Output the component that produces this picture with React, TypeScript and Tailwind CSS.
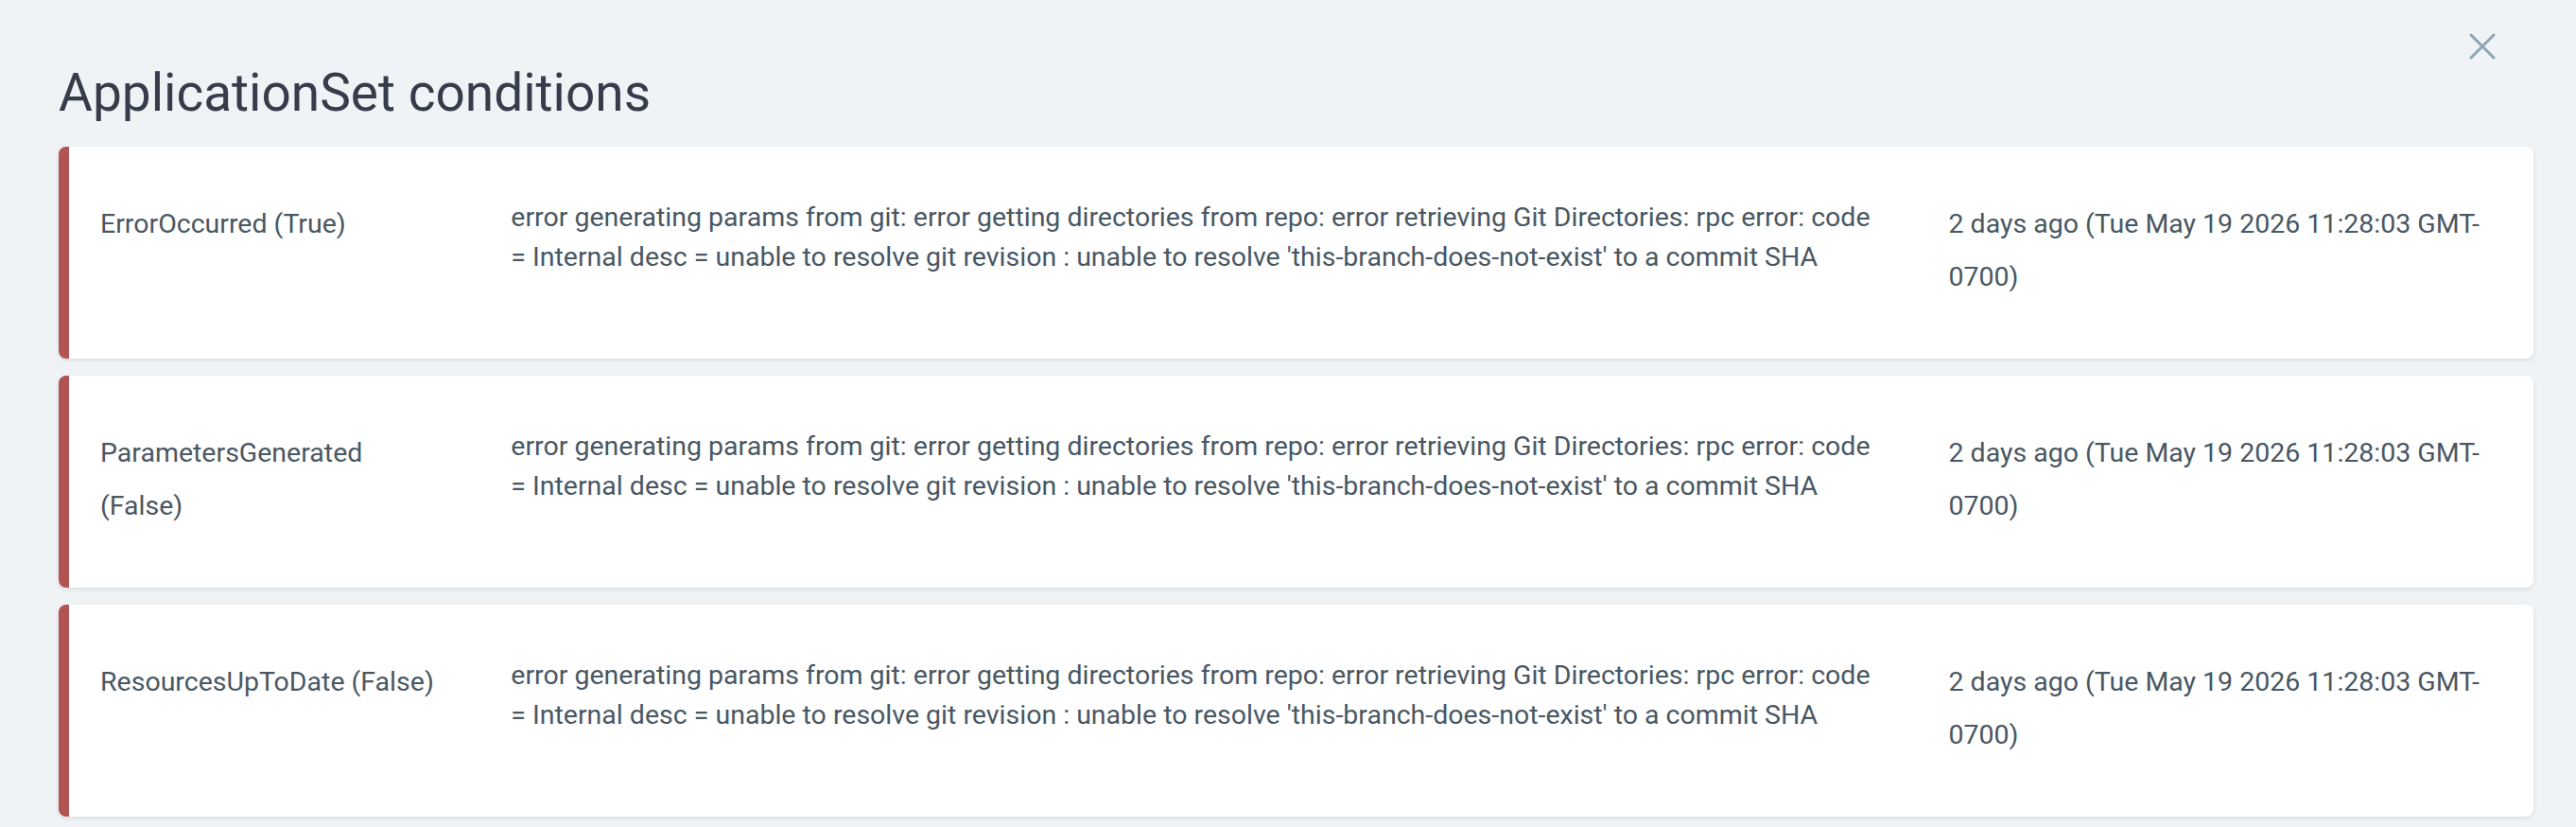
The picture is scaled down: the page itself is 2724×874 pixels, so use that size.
const CONDITIONS = [
  { type: 'ErrorOccurred', status: 'True' },
  { type: 'ParametersGenerated', status: 'False' },
  { type: 'ResourcesUpToDate', status: 'False' },
];

const MESSAGE =
  "error generating params from git: error getting directories from repo: error retrieving Git Directories: rpc error: code = Internal desc = unable to resolve git revision : unable to resolve 'this-branch-does-not-exist' to a commit SHA";

const TIME = '2 days ago (Tue May 19 2026 11:28:03 GMT-0700)';

function CloseIcon() {
  return (
    <svg width="28" height="28" viewBox="0 0 28 28" fill="none" stroke="#8fa4b1" strokeWidth="3" strokeLinecap="round">
      <line x1="2" y1="2" x2="26" y2="26" />
      <line x1="26" y1="2" x2="2" y2="26" />
    </svg>
  );
}

export default function App() {
  return (
    <div className="min-h-screen w-full bg-[#eff3f6] pl-[62px] pr-[45px] pt-[65px] font-['Roboto','Liberation_Sans',sans-serif] relative">
      {/* close button */}
      <button className="absolute top-[35px] right-[85px] w-[28px] h-[28px] flex items-center justify-center">
        <CloseIcon />
      </button>

      <h2 className="text-[55px] leading-[66px] font-normal text-[#363c4a] mb-[24px]">ApplicationSet conditions</h2>

      <div className="flex flex-col gap-[18px]">
        {CONDITIONS.map((c) => (
          <div
            key={c.type}
            className="bg-white rounded-[8px] border-l-[11px] border-[#b35454] shadow-[0_2px_5px_rgba(0,0,0,0.09)] grid grid-cols-[2fr_7fr_3fr] pt-[54px] pb-[58px] text-[28.5px] text-[#495763]"
          >
            <div className="pl-[33px] pr-[40px] leading-[56px]">
              {c.type} ({c.status})
            </div>
            <div className="px-[33px] leading-[42px]">{MESSAGE}</div>
            <div className="px-[33px] leading-[56px]">{TIME}</div>
          </div>
        ))}
      </div>
    </div>
  );
}
